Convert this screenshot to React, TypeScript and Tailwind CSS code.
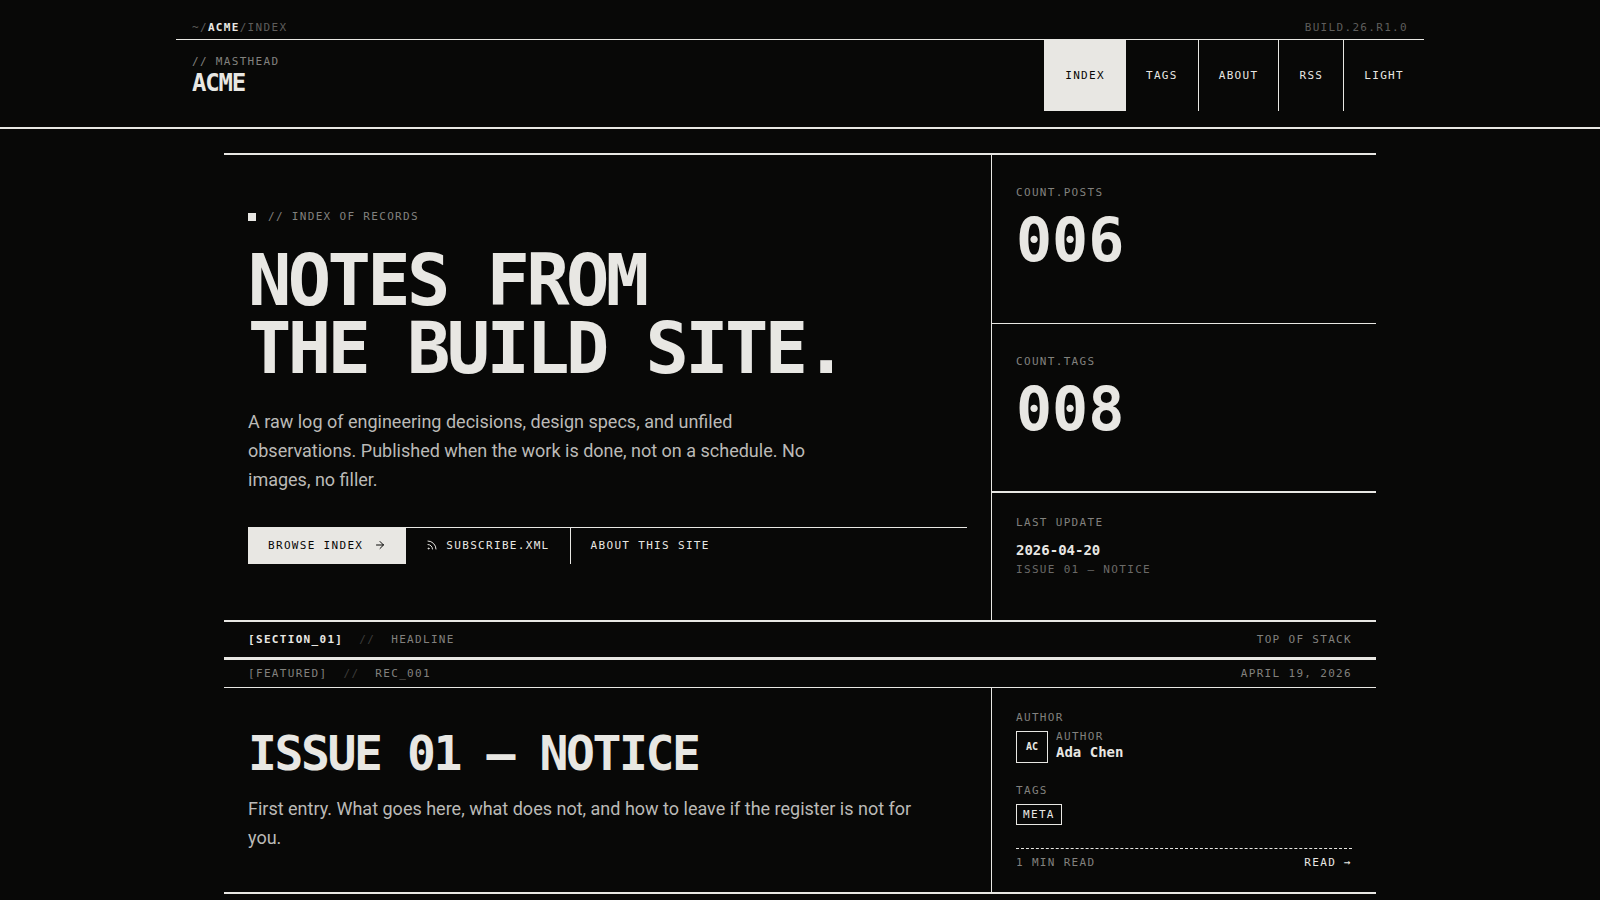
import { ArrowRight, Rss } from 'lucide-react';

const NAV_ITEMS = [
  { href: '#index', label: 'INDEX', active: true },
  { href: '#tags', label: 'TAGS' },
  { href: '#about', label: 'ABOUT' },
  { href: '#rss', label: 'RSS' },
];

const COUNTS = [
  { label: 'COUNT.POSTS', value: '006', border: 'border-b' },
  { label: 'COUNT.TAGS', value: '008', border: 'border-b-2' },
];

const LABEL = 'text-[11px] leading-[11px] tracking-[0.12em]';

function Header() {
  return (
    <header className="border-b-2 border-[#e8e7e3] pb-4">
      <div className="mx-auto max-w-[1248px]">
        <div className={`flex justify-between border-b border-[#e8e7e3] px-4 pt-[22px] pb-1.5 text-[#5e5d5b] ${LABEL}`}>
          <p>
            ~/<span className="font-bold text-[#e8e7e3]">ACME</span>/INDEX
          </p>
          <p>BUILD.26.R1.0</p>
        </div>

        <div className="flex items-stretch justify-between">
          <a href="#index" className="flex flex-col px-4 pt-4 pb-3.5">
            <span className={`text-[#82817e] ${LABEL}`}>// MASTHEAD</span>
            <span className="mt-0.5 text-2xl leading-7 font-bold tracking-tighter">ACME</span>
          </a>
          <nav className="flex items-stretch">
            {NAV_ITEMS.map((item) => (
              <a
                key={item.href}
                href={item.href}
                className={`flex items-center border-l border-[#e8e7e3] px-5 ${LABEL} ${
                  item.active ? 'bg-[#e8e7e3] text-[#080807]' : ''
                }`}
              >
                {item.label}
              </a>
            ))}
            <button type="button" className={`border-l border-[#e8e7e3] px-5 ${LABEL}`}>
              LIGHT
            </button>
          </nav>
        </div>
      </div>
    </header>
  );
}

function Hero() {
  return (
    <section className="grid grid-cols-3 border-y-2 border-[#e8e7e3]">
      <div className="col-span-2 border-r border-[#e8e7e3] px-6 py-14">
        <p className={`flex items-center gap-3 text-[#82817e] ${LABEL}`}>
          <span className="size-2 bg-[#e8e7e3]" />
          // INDEX OF RECORDS
        </p>
        <h1 className="mt-6 text-7xl leading-[68px] font-bold tracking-tighter">
          NOTES FROM
          <br />
          THE BUILD SITE.
        </h1>
        <p className="mt-[25px] max-w-xl font-['Roboto',sans-serif] text-lg leading-[29px] text-[#bbbab7]">
          A raw log of engineering decisions, design specs, and unfiled observations. Published when
          the work is done, not on a schedule. No images, no filler.
        </p>
        <div className={`mt-[33px] flex border-t border-[#e8e7e3] ${LABEL}`}>
          <a href="#browse" className="flex items-center gap-[11px] bg-[#e8e7e3] px-5 pt-[11px] pb-[13px] text-[#080807]">
            BROWSE INDEX
            <ArrowRight size={12} strokeWidth={2} />
          </a>
          <a href="#rss" className="flex items-center gap-2 px-5 pt-[11px] pb-[13px]">
            <Rss size={12} strokeWidth={2} />
            SUBSCRIBE.XML
          </a>
          <a href="#about" className="flex items-center border-l border-[#e8e7e3] px-5 pt-[11px] pb-[13px]">
            ABOUT THIS SITE
          </a>
        </div>
      </div>

      <div className="grid">
        {COUNTS.map((count) => (
          <div key={count.label} className={`border-[#e8e7e3] px-6 py-8 ${count.border}`}>
            <p className={`text-[#82817e] ${LABEL}`}>{count.label}</p>
            <p className="mt-3 text-6xl leading-[60px] font-bold">{count.value}</p>
          </div>
        ))}
        <div className="p-6">
          <p className={`text-[#82817e] ${LABEL}`}>LAST UPDATE</p>
          <p className="mt-3 text-sm leading-5 font-bold">2026-04-20</p>
          <p className={`mt-1 text-[#6b6a68] ${LABEL}`}>ISSUE 01 — NOTICE</p>
        </div>
      </div>
    </section>
  );
}

function Featured() {
  return (
    <article className="border-t-[3px] border-b-2 border-[#e8e7e3]">
      <div className={`flex justify-between border-b border-[#e8e7e3] px-6 py-2 text-[#82817e] ${LABEL}`}>
        <p className="flex gap-4">
          <span>[FEATURED]</span>
          <span className="text-[#3d3c3a]">//</span>
          <span>REC_001</span>
        </p>
        <time dateTime="2026-04-19">APRIL 19, 2026</time>
      </div>

      <div className="grid grid-cols-3">
        <div className="col-span-2 border-r border-[#e8e7e3] px-6 py-10">
          <h2 className="text-5xl leading-[50px] font-bold tracking-tighter">ISSUE 01 — NOTICE</h2>
          <p className="mt-4 max-w-2xl font-['Roboto',sans-serif] text-lg leading-[29px] text-[#bbbab7]">
            First entry. What goes here, what does not, and how to leave if the register is not for
            you.
          </p>
        </div>

        <div className="p-6">
          <p className={`text-[#82817e] ${LABEL}`}>AUTHOR</p>
          <div className="mt-2 flex gap-2">
            <span className="flex size-8 items-center justify-center border border-[#e8e7e3] text-[10px] leading-[10px] font-bold">
              AC
            </span>
            <div>
              <p className={`text-[#82817e] ${LABEL}`}>AUTHOR</p>
              <p className="text-sm leading-[21px] font-bold">Ada Chen</p>
            </div>
          </div>

          <p className={`mt-[22px] text-[#82817e] ${LABEL}`}>TAGS</p>
          <div className="mt-2 flex">
            <a href="#meta" className={`border border-[#e8e7e3] px-1.5 py-1 ${LABEL}`}>
              META
            </a>
          </div>

          <div className={`mt-[23px] flex justify-between border-t border-dashed border-[#e8e7e3] pt-2 ${LABEL}`}>
            <span className="text-[#82817e]">1 MIN READ</span>
            <a href="#issue-01">READ →</a>
          </div>
        </div>
      </div>
    </article>
  );
}

export default function App() {
  return (
    <div className="min-h-screen bg-[#080807] font-['DejaVu_Sans_Mono',monospace] text-[#e8e7e3]">
      <Header />
      <main className="mx-auto mt-6 max-w-6xl">
        <Hero />
        <div className={`flex justify-between px-6 py-3 text-[#82817e] ${LABEL}`}>
          <h2 className="flex gap-4">
            <span className="font-bold text-[#e8e7e3]">[SECTION_01]</span>
            <span className="text-[#3d3c3a]">//</span>
            <span>HEADLINE</span>
          </h2>
          <p>TOP OF STACK</p>
        </div>
        <Featured />
      </main>
    </div>
  );
}
